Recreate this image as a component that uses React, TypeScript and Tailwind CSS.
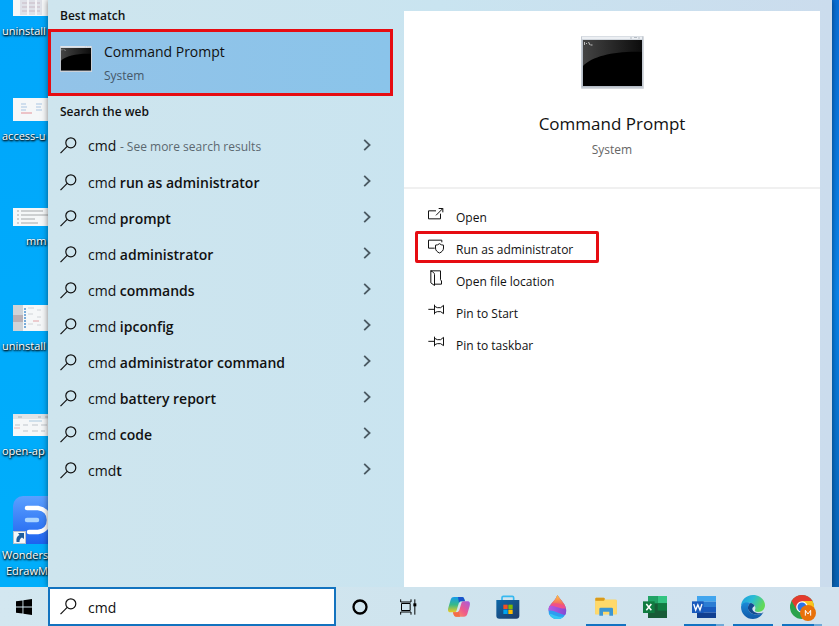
import type { ReactNode } from "react";

const suggestions = [
  { typed: "cmd", rest: " run as administrator" },
  { typed: "cmd", rest: " prompt" },
  { typed: "cmd", rest: " administrator" },
  { typed: "cmd", rest: " commands" },
  { typed: "cmd", rest: " ipconfig" },
  { typed: "cmd", rest: " administrator command" },
  { typed: "cmd", rest: " battery report" },
  { typed: "cmd", rest: " code" },
  { typed: "cmd", rest: "t" },
];

const SearchIcon = () => (
  <svg width="17" height="17" viewBox="0 0 17 17" fill="none" stroke="#111" strokeWidth="1.2" className="shrink-0">
    <circle cx="10.8" cy="5.8" r="5" />
    <path d="M7.2 9.4 .5 16.2" />
  </svg>
);

const ChevronIcon = () => (
  <svg width="8" height="12" viewBox="0 0 8 12" fill="none" stroke="#4b5a63" strokeWidth="1.8">
    <path d="M1.2.8 6.6 6 1.2 11.2" />
  </svg>
);

const ConsoleIcon = ({ className }: { className: string }) => (
  <svg viewBox="0 0 63 53" className={className} preserveAspectRatio="none">
    <defs>
      <linearGradient id="gloss" x1="0" y1="0" x2="1" y2="0">
        <stop offset="0" stopColor="#444" />
        <stop offset="1" stopColor="#0c0c0c" />
      </linearGradient>
    </defs>
    <rect width="63" height="53" rx="1" fill="#d5d9de" />
    <rect x=".5" y=".5" width="61" height="51" fill="#b4bcc6" />
    <rect x="1" y=".5" width="60" height="3" fill="#eceff3" />
    <path d="M49 2h2M53 1.5h3M57 2h2" stroke="#b5bcc4" />
    <rect x="2" y="4" width="59" height="46" fill="#000" />
    <path d="M2 4h59v12C34 15 12 20 2 30Z" fill="url(#gloss)" />
    <path d="M3.500 6v3M5 7.500h1M7.500 6l1.500 3M9.500 9h2" stroke="#ccc" strokeWidth=".9" />
  </svg>
);

const Thumb = ({ height, children }: { height: number; children: ReactNode }) => (
  <svg width="35" height={height} viewBox={`0 0 35 ${height}`} className="ml-[13px] shrink-0">
    <rect width="35" height={height} fill="#f5f7f8" />
    {children}
  </svg>
);

const desktopItems = [
  {
    name: "uninstall",
    label: "pl-0.5",
    cell: "h-[39px]",
    art: (
      <Thumb height={16}>
        <rect x="7" width="22" height="15" fill="#dfe1e8" />
        <path d="M9 3h18M9 7h18M9 11h18" stroke="#c9b9c4" strokeWidth="1" />
        <path d="M15 0v15M23 0v15" stroke="#f3f3f6" strokeWidth="2" />
      </Thumb>
    ),
  },
  {
    name: "access-u",
    label: "pl-0.5",
    cell: "h-[105px]",
    art: (
      <Thumb height={23}>
        <path d="M8 6h5M8 9h6M8 12h5M23 6h6M23 9h5M23 12h6" stroke="#a9c5e2" />
        <path d="M8 15h11" stroke="#ecc4c8" strokeWidth="2" />
      </Thumb>
    ),
  },
  {
    name: "mm",
    label: "pl-[26px]",
    cell: "h-[105px]",
    art: (
      <Thumb height={18}>
        <path d="M4 3h2M8 3h22M4 7h2M8 7h27M4 11h2M8 11h14M4 15h2M8 15h17" stroke="#a5a8aa" />
      </Thumb>
    ),
  },
  {
    name: "uninstall",
    label: "pl-0.5",
    cell: "h-[105px]",
    art: (
      <Thumb height={26}>
        <rect width="10" height="26" fill="#cfd3d7" />
        <rect y="10" width="10" height="7" fill="#b9b0b5" />
        <path d="M12 3v20" stroke="#78abd9" strokeWidth="2" strokeDasharray="2 1" />
        <path d="M15 3h6M24 5h4M15 9h5M24 12h4M15 19h5M24 20h4" stroke="#d0d4d8" />
        <path d="M20 16h6" stroke="#e2a0a4" />
      </Thumb>
    ),
  },
  {
    name: "open-ap",
    label: "pl-0.5",
    cell: "h-[105px]",
    art: (
      <Thumb height={22}>
        <rect width="35" height="5" fill="#e0e4e7" />
        <path d="M5 3h4M25 3h3M32 3h3" stroke="#aeb4b8" />
        <path d="M16 7h13" stroke="#a9c9df" />
        <path d="M2 11h5M10 11h5M19 11h6M28 11h6M10 17h5M19 17h6M28 17h4" stroke="#bfc5cb" />
        <path d="M1 14h6" stroke="#eab7ba" />
      </Thumb>
    ),
  },
];

const EdrawIcon = () => (
  <svg width="35" height="48" viewBox="0 0 35 48" className="ml-[13px] shrink-0">
    <defs>
      <linearGradient id="edraw" x1="0" y1="0" x2="0" y2="1">
        <stop offset="0" stopColor="#5ba0ff" />
        <stop offset="1" stopColor="#1c62ef" />
      </linearGradient>
    </defs>
    <path d="M10 0H35V48H0V10A10 10 0 0 1 10 0Z" fill="url(#edraw)" />
    <path d="M14 12H25C32 13 36 18 36 24S32 35 25 36H16" fill="none" stroke="#fff" strokeWidth="4.500" strokeLinecap="round" />
    <path d="M14 24H24" stroke="#a9d4ff" strokeWidth="4.500" strokeLinecap="round" />
    <rect x=".5" y="35.500" width="12" height="12" fill="#f4f6f8" stroke="#b8c1cb" />
    <path d="M3.500 46C3 42 4 40 6.500 39L5 37H11V43L9 41.500C7 42.500 6.500 44 6.500 46Z" fill="#1f5d9e" />
  </svg>
);

const Desktop = () => (
  <aside className="w-12 shrink-0 overflow-hidden bg-linear-to-b from-[#00a6fb] to-[#00aefb] text-[11px] leading-4 font-medium text-white [text-shadow:1px_1px_2px_#000,0_1px_2px_#000]">
    {desktopItems.map((item, i) => (
      <div key={i} className={`flex flex-col justify-end gap-[7px] ${item.cell}`}>
        {item.art}
        <span className={`whitespace-nowrap ${item.label}`}>{item.name}</span>
      </div>
    ))}
    <div className="flex h-[120px] flex-col justify-end gap-[3px]">
      <EdrawIcon />
      <span className="pl-0.5 whitespace-nowrap">
        Wonders
        <br />
        <span className="pl-1">EdrawM</span>
      </span>
    </div>
  </aside>
);

const ResultList = () => (
  <section className="flex w-[356px] shrink-0 flex-col pr-[11px] text-[14px]">
    <h2 className="flex h-[29px] items-center pt-0.5 pl-3 text-[12px] font-semibold">Best match</h2>
    <button className="flex h-[67px] items-center gap-3 border-3 border-[#e60c12] bg-linear-to-r from-[#93c3e8] to-[#8ac4ea] pl-[9px] text-left">
      <ConsoleIcon className="mb-2 h-[26px] w-8" />
      <span className="flex flex-col gap-1 pt-0.5">
        <span className="leading-5">Command Prompt</span>
        <span className="text-[12px] leading-5 text-[#45586a]">System</span>
      </span>
    </button>
    <h2 className="flex h-[31px] items-center pl-3 text-[12px] font-semibold">Search the web</h2>
    <ul>
      <li className="flex h-[37px] items-center pr-[22px] pl-3">
        <button className="flex flex-1 items-center gap-[11px] text-left">
          <SearchIcon />
          <span>
            cmd <span className="text-[12px] text-[#5b6870]">- See more search results</span>
          </span>
        </button>
        <button aria-label="Open details" className="pb-0.5">
          <ChevronIcon />
        </button>
      </li>
      {suggestions.map((s) => (
        <li key={s.rest} className="flex h-9 items-center pr-[22px] pl-3">
          <button className="flex flex-1 items-center gap-[11px] text-left">
            <SearchIcon />
            <span>
              {s.typed}
              <span className="font-semibold">{s.rest}</span>
            </span>
          </button>
          <button aria-label="Open details" className="pb-0.5">
            <ChevronIcon />
          </button>
        </li>
      ))}
    </ul>
  </section>
);

const pinPath = (
  <path d="M85 362H103M103.500 348V377M104 353 112 357H122L130.500 350V375L122 369H112L104 372" />
);

const actions = [
  {
    name: "Open",
    viewBox: "84 52 48 48",
    icon: <path d="M108 66.500H85.500V90.500H121.500V75M108 80 128 60M116 59.500H128.500V71" />,
  },
  {
    name: "Run as administrator",
    viewBox: "84 148 48 48",
    icon: (
      <path d="M104 178.500H85.500V154.500H125.500V161M118.500 165C115 168 111 169.500 106.500 169.500V178C106.500 186 112 190 118.500 193 125 190 130.500 186 130.500 178V169.500C126 169.500 122 168 118.500 165Z" />
    ),
  },
  {
    name: "Open file location",
    viewBox: "84 243 48 48",
    icon: <path d="M92 245.500H121.500V272L124.500 276V285.500H104M92 245.500C100 249 103.500 252 103.500 257V289.500L92.500 281.500V245" />,
  },
  { name: "Pin to Start", viewBox: "84 340 48 48", icon: pinPath },
  { name: "Pin to taskbar", viewBox: "84 340 48 48", icon: pinPath },
];

const DetailsCard = () => (
  <section className="mt-[11px] flex-1 bg-white">
    <div className="flex h-[178px] flex-col items-center border-b-2 border-[#f0f0f0] pt-[25px]">
      <ConsoleIcon className="h-[53px] w-[63px]" />
      <h1 className="mt-[23px] text-[17px] leading-6">Command Prompt</h1>
      <p className="mt-1 text-[12px] leading-5 text-[#666]">System</p>
    </div>
    <ul className="pt-2.5 pl-[11px]">
      {actions.map((action) => (
        <li key={action.name}>
          <button
            className={`flex h-8 w-[184px] items-center gap-3 rounded-xs border-3 pl-2.5 text-left text-[12px] ${
              action.name === "Run as administrator" ? "border-[#e60c12]" : "border-transparent"
            }`}
          >
            <svg viewBox={action.viewBox} fill="none" stroke="#111" strokeWidth="3" className="mb-0.5 size-4">
              {action.icon}
            </svg>
            <span className="pt-1.5 whitespace-nowrap">{action.name}</span>
          </button>
        </li>
      ))}
    </ul>
  </section>
);

const CopilotIcon = () => (
  <svg viewBox="501 45 72 72" className="size-6">
    <defs>
      <linearGradient id="cpA" x1="0" y1="0" x2="0" y2="1">
        <stop offset="0" stopColor="#159bea" />
        <stop offset=".5" stopColor="#35b98a" />
        <stop offset="1" stopColor="#f0cb22" />
      </linearGradient>
      <linearGradient id="cpB" x1="1" y1="0" x2="0" y2="1">
        <stop offset="0" stopColor="#a45ce0" />
        <stop offset=".5" stopColor="#ee5a8c" />
        <stop offset="1" stopColor="#ffa052" />
      </linearGradient>
    </defs>
    <path d="M522 51H546C552 51 553 57 555 64H544C538 64 537 68 535 74L530 91C528 97 525 97 519 97H511C504 97 503 90 505 83L512 59C514 53 517 51 522 51Z" fill="url(#cpA)" />
    <path d="M534 51H546C552 51 553 57 555 64H544C540 64 538 66 537 69Z" fill="#1a54cb" />
    <path d="M552 110H528C522 110 521 104 519 97H530C536 97 537 93 539 87L544 70C546 64 549 64 555 64H563C570 64 571 71 569 78L562 102C560 108 557 110 552 110Z" fill="url(#cpB)" />
    <path d="M519 97H530C534 97 536 95 537 92L540 110H528C522 110 521 104 519 97Z" fill="#f36d47" />
  </svg>
);

const StoreIcon = () => (
  <svg viewBox="647 46 72 72" className="size-6">
    <defs>
      <linearGradient id="store" x1="0" y1="0" x2="1" y2="1">
        <stop offset="0" stopColor="#0c67a8" />
        <stop offset="1" stopColor="#213a68" />
      </linearGradient>
    </defs>
    <path d="M665 64V54Q665 50 669 50H696Q700 50 700 54V64" fill="none" stroke="#37b9f0" strokeWidth="5" />
    <path d="M648 61H717V108Q717 117 708 117H657Q648 117 648 108Z" fill="url(#store)" />
    <path d="M669 75h13v13h-13Z" fill="#f25022" />
    <path d="M684 75h13v13h-13Z" fill="#7fba00" />
    <path d="M669 90h13v13h-13Z" fill="#00a4ef" />
    <path d="M684 90h13v13h-13Z" fill="#ffb900" />
  </svg>
);

const DropIcon = () => (
  <svg viewBox="314 15 72 72" className="size-6">
    <defs>
      <clipPath id="drop">
        <path d="M351 14C356 26 378 42 378 62A27 26 0 0 1 324 62C324 42 347 34 351 14Z" />
      </clipPath>
      <linearGradient id="dropTip" x1="0" y1="0" x2="0" y2="1">
        <stop offset="0" stopColor="#ffd83a" />
        <stop offset="1" stopColor="#f0566a" />
      </linearGradient>
      <linearGradient id="dropBand" x1="0" y1="0" x2="1" y2="0">
        <stop offset="0" stopColor="#c45be6" />
        <stop offset="1" stopColor="#7a48d0" />
      </linearGradient>
    </defs>
    <g clipPath="url(#drop)">
      <rect x="314" y="12" width="72" height="76" fill="#2f9df0" />
      <path d="M314 12H386V66C366 70 346 48 314 62Z" fill="#f0508a" />
      <path d="M314 12H386V46C366 50 356 34 330 42H314Z" fill="url(#dropTip)" />
      <path d="M314 50C340 38 352 62 386 54V76C354 78 342 52 314 66Z" fill="url(#dropBand)" />
      <path d="M314 72C334 66 344 84 370 80V90H314Z" fill="#35c6f4" />
    </g>
  </svg>
);

const ExplorerIcon = () => (
  <svg viewBox="101 46 72 72" className="size-6">
    <path d="M105 57Q105 54 108 54H130L135 60H165Q169 60 169 64V104H105Z" fill="#f9c846" />
    <path d="M105 57Q105 54 108 54H131L134 57 130 63H105Z" fill="#d99a1c" />
    <path d="M105 64H131L135 60H169V104H105Z" fill="#ffd96a" />
    <path d="M117 108V88Q117 84 121 84H154Q158 84 158 88V108H147V96H128V108Z" fill="#3c96d2" />
  </svg>
);

const ExcelIcon = () => (
  <svg viewBox="249 45 72 72" className="size-6">
    <path d="M264 48H321V114H264Z" fill="#185c37" />
    <path d="M264 48H293V70H264Z" fill="#21a366" />
    <path d="M293 48H321V70H293Z" fill="#33c481" />
    <path d="M293 70H321V92H293Z" fill="#107c41" />
    <path d="M249 64H284V99H249Z" fill="#107c41" />
    <path d="M259 72 274 91M274 72 259 91" stroke="#fff" strokeWidth="4.500" />
  </svg>
);

const WordIcon = () => (
  <svg viewBox="396 45 72 72" className="size-6">
    <path d="M411 48H468V65H411Z" fill="#41a5ee" />
    <path d="M411 65H468V81H411Z" fill="#2b7cd3" />
    <path d="M411 81H468V98H411Z" fill="#185abd" />
    <path d="M411 98H468V114H411Z" fill="#103f91" />
    <path d="M396 64H431V99H396Z" fill="#185abd" />
    <path d="M401 72 407 90 413.500 74 420 90 426 72" fill="none" stroke="#fff" strokeWidth="4" />
  </svg>
);

const EdgeIcon = () => (
  <svg viewBox="543 45 72 72" className="size-6">
    <defs>
      <linearGradient id="edgeTop" x1="0" y1="0" x2="1" y2="0.4">
        <stop offset="0" stopColor="#1b9be0" />
        <stop offset=".5" stopColor="#2bbcd4" />
        <stop offset="1" stopColor="#62d957" />
      </linearGradient>
      <linearGradient id="edgeBody" x1="0" y1="0" x2="0" y2="1">
        <stop offset="0" stopColor="#1b8ad8" />
        <stop offset="1" stopColor="#1159a8" />
      </linearGradient>
    </defs>
    <path d="M543 80C543 60 559 45 579 45 600 45 615 60 615 76 615 89 605 96 594 96 586 96 584 93 585 89 588 84 586 72 572 69 558 67 546 73 543 80Z" fill="url(#edgeTop)" />
    <path d="M543 80C546 68 560 64 572 69 565 73 562 82 566 91 572 104 592 108 608 100 603 110 592 117 579 117 559 117 543 101 543 80Z" fill="url(#edgeBody)" />
    <path d="M572 69C564 73 562 84 566 91 572 104 592 108 608 100 610 99 611 97 608 98 596 103 579 98 577 88 576 83 581 79 584 78 582 73 577 70 572 69Z" fill="#124a90" />
  </svg>
);

const ChromeIcon = () => (
  <svg viewBox="690 45 81 81" className="mt-1 ml-1 size-[27px]">
    <circle cx="726" cy="81" r="36" fill="#2aa24c" />
    <path d="M726 81 694.800 63A36 36 0 0 1 757.200 63Z" fill="#e33b2e" />
    <path d="M726 63H757.200A36 36 0 0 1 726 117L741.600 90Z" fill="#fcc31e" />
    <path d="M694.800 63 710.400 90 726 63Z" fill="#e33b2e" />
    <circle cx="726" cy="81" r="17.500" fill="#fff" />
    <circle cx="726" cy="81" r="13.500" fill="#2a74e8" />
    <circle cx="744" cy="99" r="24" fill="#e8710a" />
    <path d="M736 107V91L744 102 752 91V107" fill="none" stroke="#fff" strokeWidth="3" />
  </svg>
);

const apps = [
  { name: "Copilot", icon: <CopilotIcon />, bar: "" },
  { name: "Microsoft Store", icon: <StoreIcon />, bar: "" },
  { name: "Paint", icon: <DropIcon />, bar: "" },
  { name: "File Explorer", icon: <ExplorerIcon />, bar: "bg-[#1273c2]" },
  { name: "Excel", icon: <ExcelIcon />, bar: "" },
  { name: "Word", icon: <WordIcon />, bar: "bg-linear-to-r from-[#1273c2] from-80% to-[#6fa9d8] to-80%" },
  { name: "Edge", icon: <EdgeIcon />, bar: "bg-[#1273c2]" },
  { name: "Chrome", icon: <ChromeIcon />, bar: "bg-linear-to-r from-[#1273c2] from-80% to-[#6fa9d8] to-80%" },
];

const Taskbar = () => (
  <footer className="z-20 flex h-[39px] shrink-0 bg-linear-to-r from-[#d3e7f0] via-[#cfe4ee] to-[#d2e2ee]">
    <button aria-label="Start" className="flex w-12 items-center justify-center">
      <svg width="16" height="16" viewBox="0 0 16 16">
        <path d="M0 2.300 6.500 1.400V7.500H0ZM7.400 1.200 16 0V7.500H7.400ZM0 8.400H6.500V14.600L0 13.700ZM7.400 8.400H16V16L7.400 14.800Z" />
      </svg>
    </button>
    <label className="flex w-72 items-center gap-[11px] border-2 border-[#1373bf] bg-white pl-2.5">
      <SearchIcon />
      <input
        type="text"
        defaultValue="cmd"
        aria-label="Type here to search"
        className="w-full min-w-0 pt-0.5 text-[14px] outline-none"
      />
    </label>
    <button aria-label="Cortana" className="flex w-12 items-center justify-center">
      <svg width="16" height="16" viewBox="0 0 16 16">
        <circle cx="8" cy="8" r="6.500" fill="none" stroke="#000" strokeWidth="2.300" />
      </svg>
    </button>
    <button aria-label="Task view" className="mr-0.5 flex w-12 items-center justify-center">
      <svg width="17" height="16" viewBox="359 56 51 48" fill="none" stroke="#000" strokeWidth="3">
        <path d="M361 57V65H392V57M363.500 69.500H389.500V90.500H363.500ZM361 103V95H392V103M403.500 57V103" />
        <path d="M399 69h9v9h-9Z" fill="#000" stroke="none" />
      </svg>
    </button>
    {apps.map((app) => (
      <button key={app.name} aria-label={app.name} className="flex w-[49px] flex-col items-center pt-0.5">
        <span className="flex flex-1 items-center">{app.icon}</span>
        <span className={`h-0.5 w-10 ${app.bar}`} />
      </button>
    ))}
  </footer>
);

export default function App() {
  return (
    <div className="flex min-h-screen flex-col font-['Open_Sans','Noto_Sans',sans-serif] text-[#111]">
      <div className="flex flex-1">
        <Desktop />
        <main className="z-10 flex flex-1 bg-linear-to-r from-[#cee5ee] via-[#c9e4f0] to-[#cbdced] pr-3 shadow-[0_0_6px_rgba(0,0,0,0.5)]">
          <ResultList />
          <DetailsCard />
        </main>
        <div className="w-[7px] shrink-0 bg-linear-to-b from-[#0a6fd6] via-[#0a84ea] to-[#0a62b4]" />
      </div>
      <Taskbar />
    </div>
  );
}
